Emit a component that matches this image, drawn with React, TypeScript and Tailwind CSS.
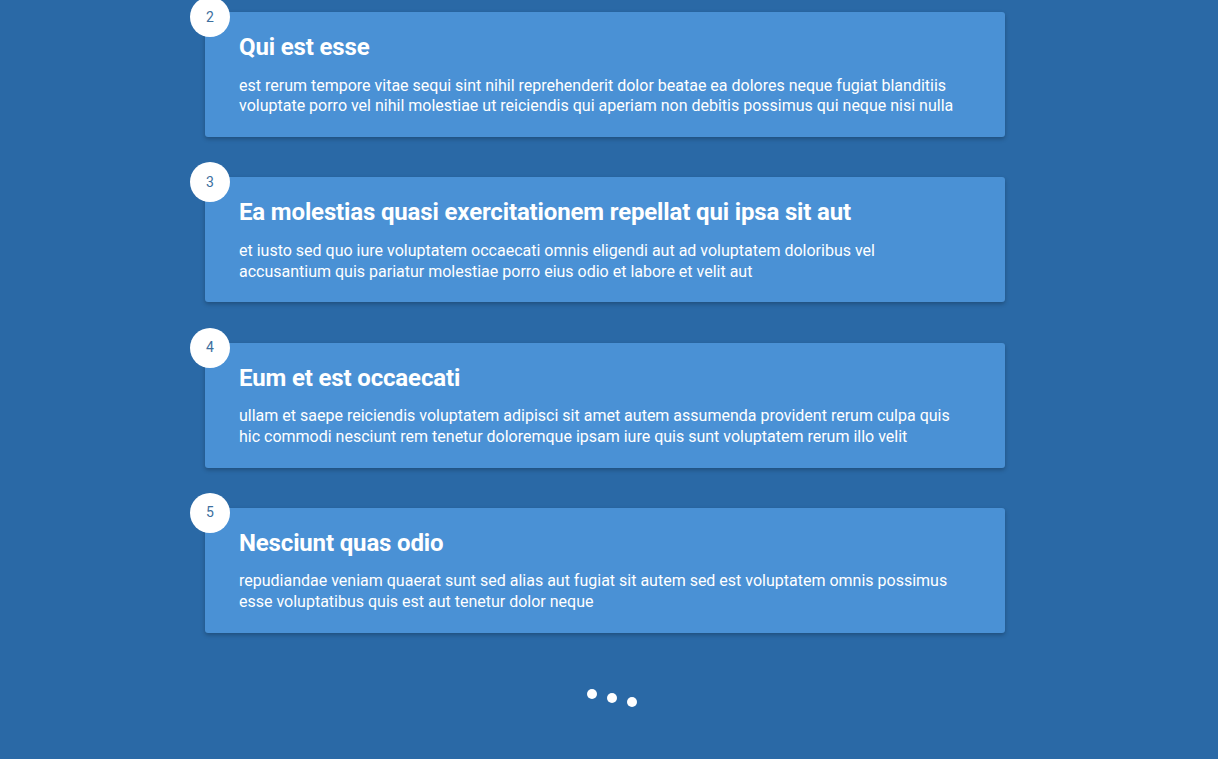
const posts = [
  {
    id: 2,
    title: 'Qui est esse',
    body: 'est rerum tempore vitae sequi sint nihil reprehenderit dolor beatae ea dolores neque fugiat blanditiis voluptate porro vel nihil molestiae ut reiciendis qui aperiam non debitis possimus qui neque nisi nulla',
  },
  {
    id: 3,
    title: 'Ea molestias quasi exercitationem repellat qui ipsa sit aut',
    body: 'et iusto sed quo iure voluptatem occaecati omnis eligendi aut ad voluptatem doloribus vel accusantium quis pariatur molestiae porro eius odio et labore et velit aut',
  },
  {
    id: 4,
    title: 'Eum et est occaecati',
    body: 'ullam et saepe reiciendis voluptatem adipisci sit amet autem assumenda provident rerum culpa quis hic commodi nesciunt rem tenetur doloremque ipsam iure quis sunt voluptatem rerum illo velit',
  },
  {
    id: 5,
    title: 'Nesciunt quas odio',
    body: 'repudiandae veniam quaerat sunt sed alias aut fugiat sit autem sed est voluptatem omnis possimus esse voluptatibus quis est aut tenetur dolor neque',
  },
];

export default function App() {
  return (
    <div className="min-h-[759px] bg-[#2a69a6] font-['Roboto',sans-serif] text-white">
      <div className="w-[1210px]">
        <div className="mx-auto flex w-[800px] flex-col gap-[40.3px] pt-[12px]">
          {posts.map((post) => (
            <div
              key={post.id}
              className="relative h-[125px] rounded-[3px] bg-[#4a91d5] pl-[34px] pr-[46px] pt-[19px] shadow-[0_2px_4px_rgba(0,0,0,0.25)]"
            >
              <div className="absolute -left-[15px] -top-[15px] flex h-[40px] w-[40px] items-center justify-center rounded-full bg-white text-[14px] text-[#3d6f9e]">
                {post.id}
              </div>
              <h3 className="text-[24px] leading-[32px] font-bold tracking-[-0.15px]">{post.title}</h3>
              <p className="mt-[12.5px] text-[16px] leading-[20.8px]">{post.body}</p>
            </div>
          ))}
        </div>
      </div>
      <div className="flex justify-center gap-[10px] pl-[6px] pt-[56px]">
        <span className="mt-0 h-[10px] w-[10px] rounded-full bg-white" />
        <span className="mt-[4px] h-[10px] w-[10px] rounded-full bg-white" />
        <span className="mt-[8px] h-[10px] w-[10px] rounded-full bg-white" />
      </div>
    </div>
  );
}
